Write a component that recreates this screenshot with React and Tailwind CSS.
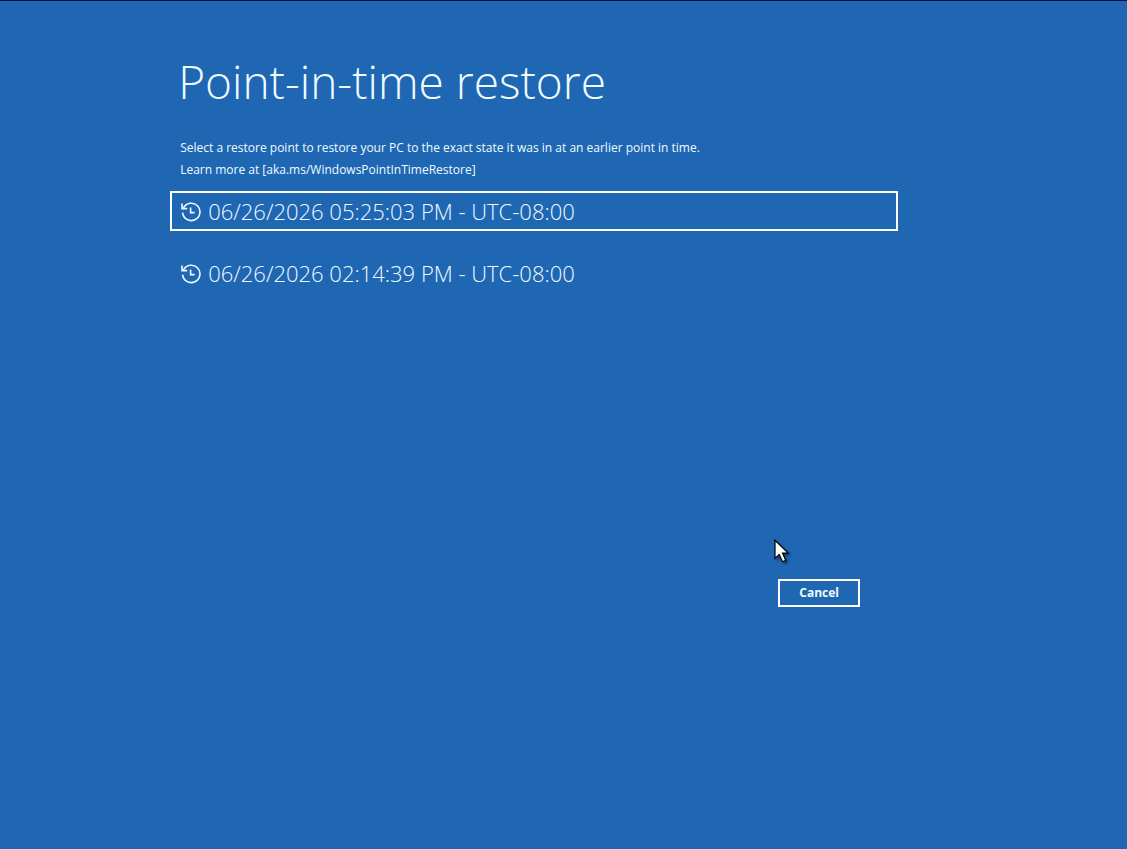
import React, { useState } from "react";

const restorePoints = [
  { id: 1, label: "06/26/2026 05:25:03 PM - UTC-08:00" },
  { id: 2, label: "06/26/2026 02:14:39 PM - UTC-08:00" },
];

const HistoryIcon = () => (
  <svg
    viewBox="0 0 22 22"
    className="h-[22px] w-[22px] shrink-0"
    fill="none"
    stroke="currentColor"
    strokeWidth="1.6"
    aria-hidden="true"
  >
    <path d="M3.4 8.2A8.7 8.7 0 1 1 2.6 12.6" />
    <path d="M2 3.6v5h5.2" />
    <path d="M10.6 7.6v5h4" />
  </svg>
);

const Cursor = () => (
  <svg
    viewBox="0 0 16 25"
    className="pointer-events-none absolute -top-10 -left-1 h-[25px] w-4 drop-shadow-[2px_2px_1px_rgba(0,0,0,0.4)]"
    aria-hidden="true"
  >
    <path
      d="M1 1.2v18.2l4.2-4 3.4 7.4 3.2-1.4-3.3-7.3h5.7z"
      fill="#fff"
      stroke="#000"
      strokeWidth="1.2"
    />
  </svg>
);

export default function App() {
  const [selected, setSelected] = useState(1);

  return (
    <main className="min-h-screen border-t border-[#06113a] bg-[#1f67b3] px-[15.1%] font-['Open_Sans','Noto_Sans',sans-serif] text-[#f0fbff]">
      <div className="w-[728px] pt-12">
        <h1 className="pl-2 text-[46px] leading-[64px] font-light">
          Point-in-time restore
        </h1>

        <div className="mt-6 pl-[10px] text-[12px] leading-[22px]">
          <p>
            Select a restore point to restore your PC to the exact state it was
            in at an earlier point in time.
          </p>
          <p>Learn more at [aka.ms/WindowsPointInTimeRestore]</p>
        </div>

        <ul className="mt-[10px] space-y-[22px]">
          {restorePoints.map((point) => (
            <li key={point.id}>
              <button
                type="button"
                onClick={() => setSelected(point.id)}
                className={`flex h-10 w-full items-center gap-[6px] border-2 pl-2 text-left text-[22px] leading-8 font-light ${
                  selected === point.id ? "border-white" : "border-transparent"
                }`}
              >
                <HistoryIcon />
                <span>{point.label}</span>
              </button>
            </li>
          ))}
        </ul>

        <div className="mt-[286px] flex justify-end pr-[38px]">
          <div className="relative">
            <Cursor />
            <button
              type="button"
              className="h-7 w-[82px] border-2 border-white text-[12px] leading-6 font-bold"
            >
              Cancel
            </button>
          </div>
        </div>
      </div>
    </main>
  );
}
